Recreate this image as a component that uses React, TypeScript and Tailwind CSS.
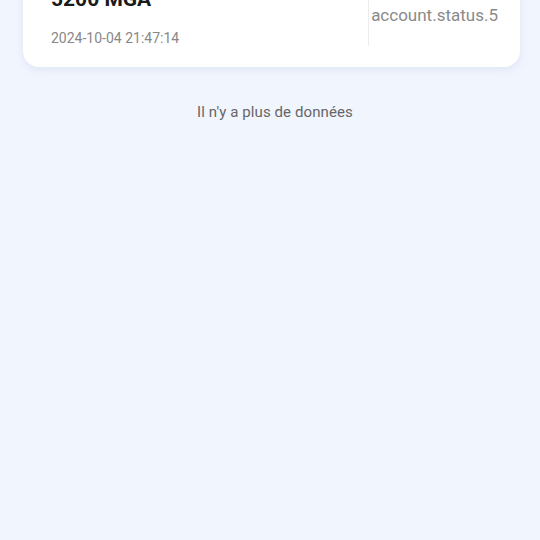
export default function App() {
  return (
    <div
      className="min-h-[540px] w-full overflow-hidden bg-[#f1f5fe] pl-[23px] pr-[20px]"
      style={{ fontFamily: "Roboto, 'Noto Sans', sans-serif" }}
    >
      <div className="mt-[-31px] flex rounded-[16px] bg-white shadow-[0_3px_8px_rgba(120,140,190,0.14)]">
        <div className="flex-1 pl-[28px] pt-4 pb-[19px]">
          <div className="text-[21px] font-bold leading-[28px] text-[#1a1a1a]">5200 MGA</div>
          <div className="mt-[15px] text-[14px] leading-[20px] text-[#888888]">2024-10-04 21:47:14</div>
        </div>
        <div className="flex h-[77px] flex-col justify-end border-l border-[#ececec] pl-[2px] pr-[22px] pb-[19px]">
          <span className="text-[17px] leading-[24px] text-[#8a8a8a]">account.status.5</span>
        </div>
      </div>
      <div className="mt-[35px] pl-[7px] text-center text-[15px] leading-[20px] tracking-[0.1px] text-[#666666]">
        Il n'y a plus de données
      </div>
    </div>
  );
}
